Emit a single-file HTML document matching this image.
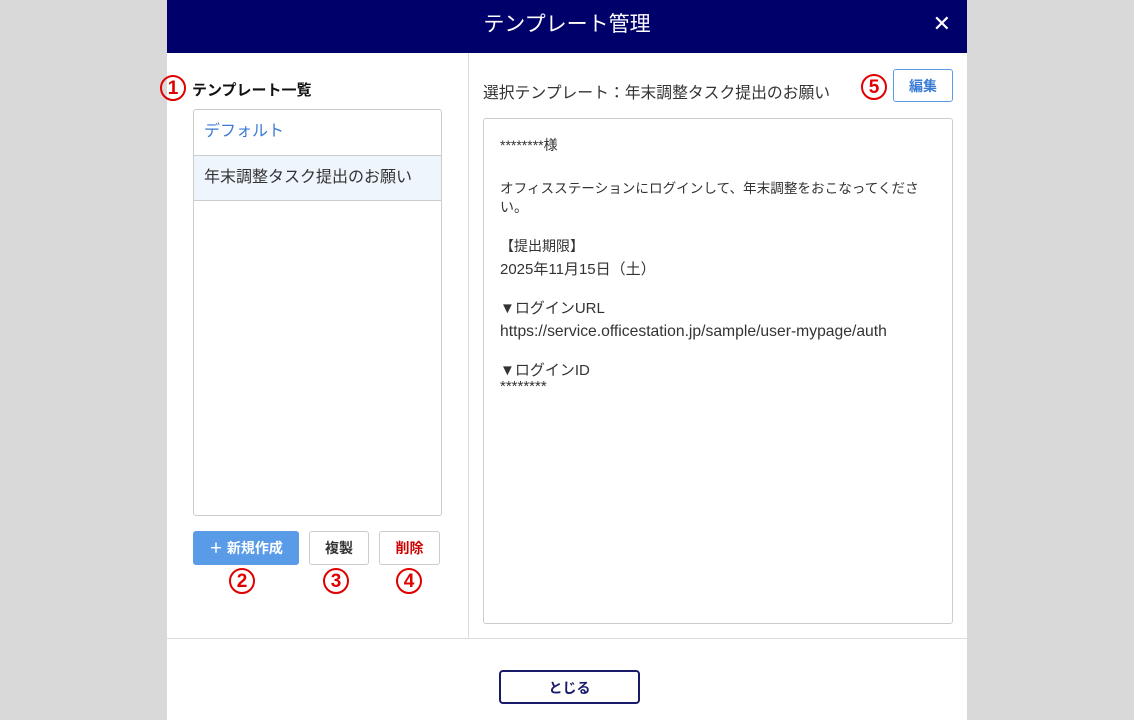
<!DOCTYPE html>
<html><head><meta charset="utf-8"><style>
*{margin:0;padding:0;box-sizing:border-box}
body{width:1134px;height:720px;background:#d9d9d9;font-family:"Liberation Sans","Noto Sans CJK JP",sans-serif;position:relative;overflow:hidden;color:#333}
.dlg{position:absolute;left:167px;top:0;width:800px;height:720px;background:#fff}
.hd{position:absolute;left:0;top:0;width:800px;height:53px;background:#00006b;color:#fff;font-size:21px;text-align:center;line-height:50px}
.x{position:absolute;right:16px;top:0;font-size:22px;line-height:48px}
.abs{position:absolute}
.num{position:absolute;width:26px;height:26px;border:2.5px solid #e00000;border-radius:50%;color:#e00000;font-weight:bold;font-size:19px;line-height:23px;text-align:center;font-family:"Liberation Sans",sans-serif}
.list{left:26px;top:109px;width:249px;height:407px;border:1px solid #ccc;border-radius:3px}
.it{height:46px;border-bottom:1px solid #ccc;font-size:16px;line-height:44px;padding-left:10px}
.btn{position:absolute;height:34px;border:1px solid #ccc;border-radius:3px;font-size:14px;font-weight:bold;text-align:center;line-height:32px;background:#fff}
.ta{left:316px;top:118px;width:470px;height:506px;border:1px solid #ccc;border-radius:3px;font-size:14px;color:#333}
.ta div{position:absolute;left:16px;white-space:nowrap}
.l{font-size:15px}
</style></head><body>
<div class="dlg">
<div class="hd">テンプレート管理<span class="x">✕</span></div>
<div class="num" style="left:-7px;top:75px">1</div>
<div class="abs" style="left:25px;top:79px;font-size:15px;font-weight:bold;color:#111">テンプレート一覧</div>
<div class="abs list">
<div class="it" style="color:#3a7bd5;height:46px">デフォルト</div>
<div class="it" style="background:#eef5fd;height:45px;font-size:16px">年末調整タスク提出のお願い</div>
</div>
<div class="btn" style="left:26px;top:531px;width:106px;background:#5a9be8;border-color:#5a9be8;color:#fff">＋ 新規作成</div>
<div class="btn" style="left:142px;top:531px;width:60px;color:#333">複製</div>
<div class="btn" style="left:212px;top:531px;width:61px;color:#cc0000">削除</div>
<div class="num" style="left:62px;top:568px">2</div>
<div class="num" style="left:156px;top:568px">3</div>
<div class="num" style="left:229px;top:568px">4</div>
<div class="abs" style="left:301px;top:53px;width:1px;height:585px;background:#ddd"></div>
<div class="abs" style="left:0;top:638px;width:800px;height:1px;background:#ddd"></div>
<div class="abs" style="left:316px;top:80px;font-size:15.8px;color:#333">選択テンプレート：年末調整タスク提出のお願い</div>
<div class="num" style="left:694px;top:74px">5</div>
<div class="btn" style="left:726px;top:69px;width:60px;height:33px;border-color:#5a9be8;color:#3a7bd5">編集</div>
<div class="abs ta">
<div style="top:16px">********様</div>
<div style="top:58px;font-size:13.6px">オフィスステーションにログインして、年末調整をおこなってくださ</div>
<div style="top:78px">い。</div>
<div style="top:117px">【提出期限】</div>
<div style="top:139px" class="l">2025年11月15日（土）</div>
<div style="top:178px" class="l">▼ログインURL</div>
<div style="top:204px;font-size:15.7px">https://service.officestation.jp/sample/user-mypage/auth</div>
<div style="top:240px" class="l">▼ログインID</div>
<div style="top:259px" class="l">********</div>
</div>
<div class="btn" style="left:332px;top:670px;width:141px;height:34px;border:2px solid #1a1a6b;color:#1a1a6b;border-radius:4px">とじる</div>
</div>
</body></html>
